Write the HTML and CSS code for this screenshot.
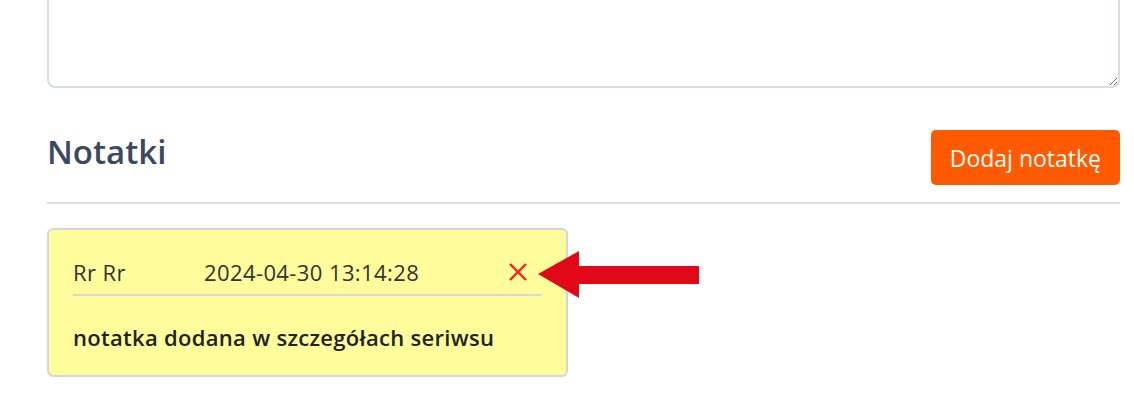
FILE: index.html
```html
<!DOCTYPE html>
<html lang="pl">
<head>
<meta charset="utf-8">
<title>Notatki</title>
<link rel="stylesheet" href="styles.css">
</head>
<body>
<div class="page">
  <textarea class="desc"></textarea>
  <div class="notes-head">
    <h2 class="notes-title">Notatki</h2>
    <button class="btn-add">Dodaj notatkę</button>
  </div>
  <div class="notes-list">
    <div class="note">
      <div class="note-meta">
        <span class="note-author">Rr Rr</span>
        <span class="note-date">2024-04-30 13:14:28</span>
        <span class="note-del">
          <svg width="20" height="20" viewBox="0 0 20 20"><path d="M2 2 L18 18 M18 2 L2 18" stroke="#ff1a1a" stroke-width="2.4" fill="none"/></svg>
        </span>
      </div>
      <div class="note-body">notatka dodana w szczegółach seriwsu</div>
    </div>
    <svg class="arrow" width="164" height="50" viewBox="0 0 164 50"><polygon points="0,24 41,1 41,16 161,16 161,34 41,34 41,48" fill="#e10918"/></svg>
  </div>
</div>
</body>
</html>
```

FILE: styles.css
```css
* { box-sizing: border-box; }
html, body { margin: 0; padding: 0; background: #fff; }
body { font-family: "Open Sans", "Noto Sans", sans-serif; }
.page { padding: 0 14px 0 47px; }
.desc {
  display: block;
  width: 100%;
  height: 110px;
  margin: -22px 0 0 0;
  border: 2px solid #d9dce1;
  border-radius: 8px;
  background: #fff;
  resize: vertical;
  outline: none;
}
.notes-head {
  display: flex;
  justify-content: space-between;
  align-items: flex-start;
  margin-top: 42px;
  padding-bottom: 17px;
  border-bottom: 2px solid #d9dce1;
}
.notes-title {
  margin: 0;
  font-size: 33px;
  font-weight: 600;
  color: #3a4861;
  line-height: 44px;
}
.btn-add {
  height: 55px;
  padding: 0 19px;
  border: none;
  border-radius: 5px;
  background: #ff5a00;
  color: #fff;
  font-family: "Open Sans", "Noto Sans", sans-serif;
  font-size: 23px;
}
.notes-list {
  position: relative;
  padding-top: 24px;
}
.note {
  width: 521px;
  height: 149px;
  background: #fffc9c;
  border: 2px solid #d4d6db;
  border-radius: 6px;
  padding: 0 24px;
}
.note-meta {
  display: flex;
  align-items: center;
  height: 66px;
  padding-top: 20px;
  border-bottom: 2px solid #d6d8dc;
  font-size: 22px;
  letter-spacing: 0.4px;
  color: #333;
}
.note-author { width: 131px; }
.note-del { margin-left: auto; margin-right: 14px; display: flex; }
.note-body {
  padding-top: 26px;
  font-size: 22px;
  letter-spacing: 0.3px;
  font-weight: 600;
  color: #222;
}
.arrow {
  position: absolute;
  left: 491px;
  top: 46px;
}
```
